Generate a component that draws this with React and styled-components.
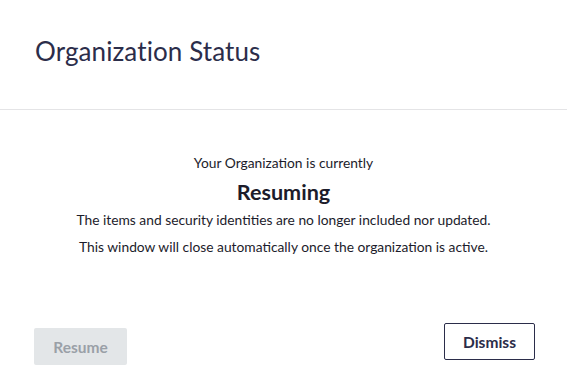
import React from "react";
import styled, { createGlobalStyle } from "styled-components";

const navy = "#2b2d4a";
const ink = "#1c1c2b";

const GlobalStyle = createGlobalStyle`
  html, body {
    margin: 0;
    padding: 0;
    background: #ffffff;
    font-family: Lato, "Open Sans", sans-serif;
  }
`;

const Modal = styled.div({
  width: "567px",
  height: "388px",
  display: "flex",
  flexDirection: "column",
  background: "#ffffff",
});

const Header = styled.div({
  height: "110px",
  display: "flex",
  alignItems: "center",
  padding: "0 35px",
  borderBottom: "1px solid #e4e4e6",
  boxSizing: "border-box",
});

const Title = styled.h1({
  margin: "0 0 8px 0",
  fontSize: "26px",
  fontWeight: 400,
  color: navy,
  letterSpacing: "0.1px",
});

const Body = styled.div({
  display: "flex",
  flexDirection: "column",
  alignItems: "center",
  paddingTop: "39px",
  color: ink,
  textAlign: "center",
});

const Line = styled.p({
  margin: 0,
  fontSize: "13.8px",
  lineHeight: "27px",
});

const Status = styled.h2({
  margin: "2px 0 0 0",
  fontSize: "21.6px",
  fontWeight: 700,
  lineHeight: "28px",
});

const Footer = styled.div({
  marginTop: "auto",
  display: "flex",
  justifyContent: "space-between",
  alignItems: "flex-start",
  padding: "0 32px 23px 34px",
});

const Button = styled.button(({ $disabled }) => ({
  height: "37px",
  boxSizing: "border-box",
  borderRadius: "2px",
  fontFamily: "Lato, sans-serif",
  fontSize: "15.5px",
  fontWeight: 700,
  cursor: $disabled ? "default" : "pointer",
  background: $disabled ? "#e3e6e8" : "#ffffff",
  color: $disabled ? "#9aa0a7" : navy,
  border: $disabled ? "none" : `1px solid ${navy}`,
  width: $disabled ? "93px" : "91px",
  marginTop: $disabled ? "5px" : "0",
}));

export default function App() {
  return (
    <>
      <GlobalStyle />
      <Modal>
        <Header>
          <Title>Organization Status</Title>
        </Header>
        <Body>
          <Line>Your Organization is currently</Line>
          <Status>Resuming</Status>
          <Line>The items and security identities are no longer included nor updated.</Line>
          <Line>This window will close automatically once the organization is active.</Line>
        </Body>
        <Footer>
          <Button $disabled>Resume</Button>
          <Button>Dismiss</Button>
        </Footer>
      </Modal>
    </>
  );
}
